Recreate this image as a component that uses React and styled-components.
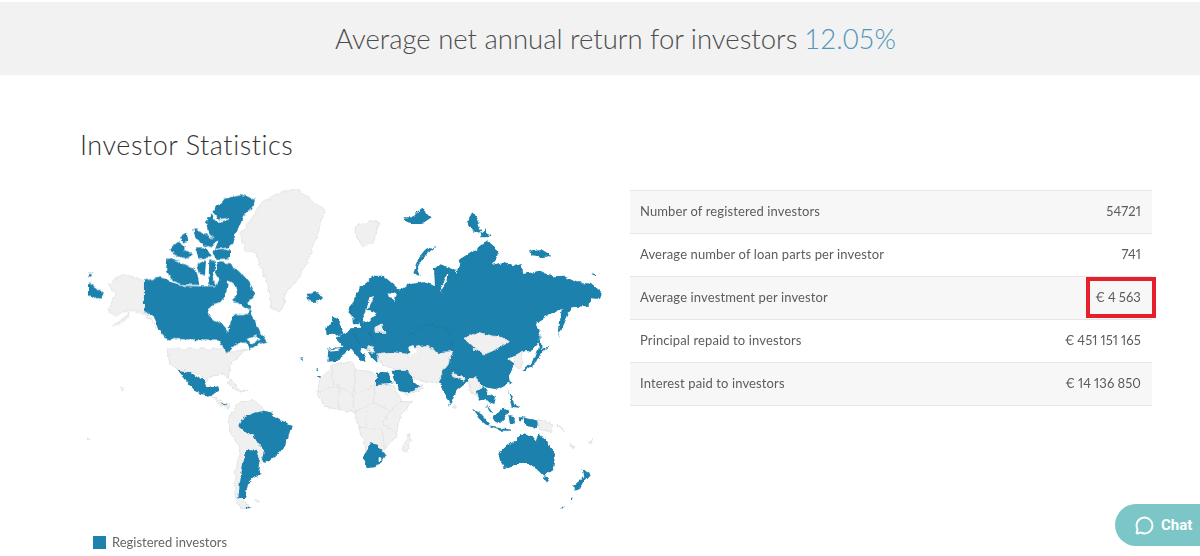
import React from 'react'
import styled, { createGlobalStyle } from 'styled-components'
import { MessageCircle } from 'lucide-react'

const GlobalStyle = createGlobalStyle`
  html, body {
    margin: 0;
    height: 100%;
    overflow: hidden;
    background: #fff;
    font-family: Lato, "Open Sans", sans-serif;
    color: #555;
  }
`

const Banner = styled.div`
  margin-top: 2px;
  height: 73px;
  padding-left: 31px;
  background: #f2f2f2;
  display: flex;
  align-items: center;
  justify-content: center;
  font-size: 27.5px;
  font-weight: 300;
  color: #4d4d4d;
`

const Rate = styled.span`
  color: #4f96bb;
  margin-left: 7px;
`

const Content = styled.main`
  padding: 54px 48px 0 80px;
`

const Title = styled.h1`
  margin: 0;
  height: 51px;
  font-size: 27px;
  line-height: 32px;
  font-weight: 300;
  color: #333;
  letter-spacing: 0.55px;
`

const Columns = styled.div`
  display: flex;
  align-items: flex-start;
`

const MapColumn = styled.div`
  width: 550px;
  flex: none;
`

const MapSvg = styled.svg`
  display: block;
  width: 530px;
  height: 335px;
  margin-top: -1px;
`

const Land = styled.path`
  fill: ${p => (p.$kind === 'blue' ? '#1f82ad' : p.$kind === 'water' ? '#fff' : '#f0f0f0')};
  stroke: ${p => (p.$kind === 'grey' ? '#e2e2e2' : 'none')};
  stroke-width: ${p => (p.$kind === 'grey' ? 3 : 0)};
  stroke-linejoin: round;
`

const Border = styled.path`
  fill: none;
  stroke: ${p => (p.$dark ? '#1b749c' : '#e0e0e0')};
  stroke-width: 2.4;
  stroke-linejoin: round;
`

const Legend = styled.div`
  display: flex;
  align-items: center;
  gap: 6px;
  margin: 21px 0 0 13px;
  font-size: 13px;
  line-height: 14px;
  color: #666;
`

const Swatch = styled.span`
  width: 13px;
  height: 13px;
  background: #1f82ad;
`

const Table = styled.div`
  width: 522px;
  margin-top: 10px;
  border-top: 1px solid #e6e6e6;
`

const Row = styled.div`
  position: relative;
  height: 40px;
  padding: 0 11px 2px 10px;
  display: flex;
  align-items: center;
  justify-content: space-between;
  font-size: 13px;
  letter-spacing: 0.12px;
  color: #5c5c5c;
  background: ${p => (p.$shaded ? '#f7f7f7' : '#fff')};
  border-bottom: 1px solid #e6e6e6;
`

const Value = styled.span`
  font-variant-numeric: proportional-nums;
  word-spacing: -0.5px;
`

const Highlight = styled.span`
  position: absolute;
  right: -4px;
  top: 0;
  width: 62px;
  height: 33px;
  border: 4px solid #e71f2b;
`

const ChatButton = styled.button`
  position: fixed;
  right: 0;
  bottom: 10px;
  width: 85px;
  height: 42px;
  padding: 0 0 0 20px;
  display: flex;
  align-items: center;
  gap: 7px;
  border: 0;
  border-radius: 22px 0 0 22px;
  background: #7cc6c7;
  color: #fff;
  font-family: Roboto, sans-serif;
  font-size: 15px;
  font-weight: 700;
`

const stats = [
  ['Number of registered investors', '54721'],
  ['Average number of loan parts per investor', '741'],
  ['Average investment per investor', '€ 4 563', true],
  ['Principal repaid to investors', '€ 451 151 165'],
  ['Interest paid to investors', '€ 14 136 850'],
]

// outlines traced from crops, every group has its own crop origin at 3x
const northWest = [
  ['grey', 'M480,170 L520,110 L540,75 L590,45 L650,30 L690,60 L735,95 L715,160 L690,230 L660,290 L620,340 L600,400 L575,385 L565,320 L545,275 L530,225 L495,210 Z'],
  ['grey', 'M192,305 L130,287 L85,315 L105,345 L85,395 L110,410 L145,392 L195,402 L230,445 L192,395 Z'],
  ['grey', 'M150,395 L130,420 L100,440 L135,425 Z'],
  ['blue', 'M27,313 L50,325 L72,345 L55,362 L27,350 Z'],
  ['blue', 'M27,282 L38,282 L38,290 L27,290 Z'],
  ['blue', 'M192,305 L245,295 L280,310 L300,320 L355,322 L410,322 L418,300 L405,275 L415,250 L450,252 L480,280 L505,310 L525,345 L505,370 L510,385 L530,440 L545,465 L560,488 L530,498 L510,512 L495,490 L470,497 L440,522 L415,482 L260,480 L235,450 L225,420 L192,395 Z'],
  ['water', 'M445,305 L465,320 L472,345 L452,365 L475,372 L505,395 L518,385 L500,405 L465,405 L452,425 L448,462 L425,435 L395,420 L385,400 L400,375 L425,368 L438,345 Z'],
  ['water', 'M500,480 L530,470 L540,480 L515,495 Z'],
  ['blue', 'M262,238 L290,245 L320,258 L345,268 L355,300 L358,318 L300,315 L280,305 L258,275 Z'],
  ['blue', 'M352,255 L378,245 L375,290 L360,285 Z'],
  ['blue', 'M388,245 L410,245 L398,295 L412,320 L385,320 Z'],
  ['blue', 'M268,210 L295,188 L315,205 L300,235 L270,220 Z'],
  ['blue', 'M300,175 L320,162 L325,185 L310,190 Z'],
  ['blue', 'M340,150 L360,155 L390,175 L415,180 L395,205 L375,200 L345,175 Z'],
  ['blue', 'M345,205 L375,205 L395,235 L355,238 Z'],
  ['blue', 'M315,210 L340,225 L320,238 L290,232 Z'],
  ['blue', 'M400,215 L450,210 L450,238 L410,240 Z'],
  ['blue', 'M378,130 L400,95 L430,60 L480,45 L525,60 L520,85 L490,110 L470,160 L450,205 L405,210 L415,185 L385,165 Z'],
  ['water', 'M393,95 L415,122 L447,116 L446,122 L412,130 L390,100 Z'],
  ['blue', 'M680,345 L710,340 L727,350 L710,370 L685,365 Z'],
]

const americas = [
  ['grey', 'M260,0 L430,0 L450,10 L500,0 L480,15 L450,50 L445,85 L430,75 L400,80 L380,95 L360,75 L295,62 L270,45 Z'],
  ['grey', 'M445,205 L475,160 L520,155 L555,185 L590,210 L550,345 L540,345 L505,400 L490,450 L510,478 L480,478 L465,440 L465,380 L480,300 L445,240 Z'],
  ['grey', 'M395,140 L420,155 L450,170 L445,180 L415,165 Z'],
  ['grey', 'M450,90 L475,120 L505,128 L470,125 L445,105 Z'],
  ['grey', 'M122,112 L130,118 L128,124 Z'],
  ['grey', 'M22,270 L29,272 L25,276 Z'],
  ['grey', 'M528,452 L540,454 L532,458 Z'],
  ['blue', 'M292,62 L325,68 L345,80 L372,92 L380,118 L415,112 L418,125 L390,140 L365,135 L340,120 L320,95 Z'],
  ['blue', 'M420,160 L438,165 L435,170 Z'],
  ['blue', 'M475,232 L490,205 L530,190 L555,185 L570,190 L590,210 L635,228 L625,265 L610,300 L575,330 L555,345 L545,330 L553,305 L535,285 L520,260 L495,250 Z'],
  ['blue', 'M500,303 L530,305 L540,330 L535,360 L545,375 L520,385 L505,400 L495,450 L475,450 L480,400 L490,340 Z'],
  ['blue', 'M497,470 L515,476 L500,478 Z'],
  ['blue', 'M662,28 L668,28 L668,33 L662,33 Z'],
  ['blue', 'M710,57 L716,57 L716,63 L710,63 Z'],
  ['blue', 'M712,78 L725,78 L725,83 L712,83 Z'],
]

const russia = [
  ['grey', 'M45,145 L90,125 L120,130 L100,190 L70,205 L50,175 Z'],
  ['blue', 'M60,435 L25,400 L60,325 L100,290 L130,290 L165,320 L180,335 L210,315 L250,310 L285,318 L282,270 L300,255 L345,272 L350,285 L360,240 L400,215 L440,185 L475,215 L470,240 L455,258 L490,250 L520,262 L545,255 L550,285 L600,275 L640,292 L670,290 L710,310 L750,310 L785,340 L780,360 L750,358 L750,380 L695,385 L670,440 L655,475 L660,425 L665,390 L620,412 L575,440 L600,465 L595,490 L560,515 L530,530 L100,540 L60,470 Z'],
  ['water', 'M145,340 L170,345 L165,365 L150,355 Z'],
  ['water', 'M318,285 L322,285 L310,330 L302,342 L306,322 Z'],
  ['blue', 'M290,200 L255,215 L235,240 L220,280 L240,295 L232,270 L250,235 Z'],
  ['blue', 'M380,130 L400,100 L415,130 L425,165 L405,160 Z'],
  ['blue', 'M420,175 L435,150 L452,175 Z'],
  ['blue', 'M190,115 L215,115 L230,100 L245,88 L275,115 L245,135 L210,135 Z'],
  ['blue', 'M570,215 L600,210 L635,232 L600,235 L575,232 Z'],
  ['blue', 'M752,285 L768,282 L768,290 Z'],
]

const eurafrica = [
  ['grey', 'M20,310 L30,275 L65,230 L125,218 L135,240 L195,255 L198,288 L250,290 L275,335 L305,335 L285,365 L265,395 L260,440 L225,480 L170,505 L165,465 L145,415 L135,370 L85,360 L45,355 Z'],
  ['grey', 'M295,435 L303,450 L290,492 L275,485 Z'],
  ['blue', 'M52,218 L55,185 L85,182 L98,172 L78,145 L105,132 L125,118 L170,115 L230,60 L320,60 L320,170 L295,170 L255,190 L215,170 L205,195 L205,218 L190,210 L175,185 L150,175 L170,215 L150,215 L125,180 L95,200 L90,215 Z'],
  ['water', 'M178,25 L192,22 L172,62 L200,72 L170,100 L155,100 L168,70 Z'],
  ['blue', 'M130,90 L145,88 L146,106 L132,106 Z'],
  ['grey', 'M195,115 L215,105 L225,130 L195,130 Z'],
  ['grey', 'M172,170 L185,172 L190,190 L178,188 Z'],
  ['blue', 'M50,130 L62,105 L68,80 L85,90 L95,115 L100,135 L75,140 Z'],
  ['blue', 'M48,120 L60,110 L65,135 L50,135 Z'],
  ['blue', 'M0,15 L25,10 L35,25 L15,42 L0,35 Z'],
]

const asia = [
  ['blue', 'M-20,60 L285,60 L300,100 L295,130 L270,160 L245,160 L205,180 L225,195 L205,225 L210,250 L170,270 L130,265 L100,235 L75,255 L50,275 L30,320 L5,260 L-20,225 Z'],
  ['grey', 'M72,118 L115,100 L150,110 L185,115 L205,128 L170,150 L135,165 L105,150 Z'],
  ['grey', 'M38,222 L75,238 L72,244 L45,236 Z'],
  ['grey', 'M85,240 L105,232 L125,270 L112,290 L90,275 Z'],
  ['grey', 'M220,170 L245,160 L245,200 L230,208 Z'],
  ['blue', 'M245,215 L280,190 L295,150 L300,105 L305,150 L330,140 L300,165 L285,195 L250,220 Z'],
  ['grey', 'M40,320 L46,322 L44,328 L38,326 Z'],
]

const middleEast = [
  ['grey', 'M200,195 L235,190 L290,195 L320,175 L345,170 L385,190 L428,188 L412,228 L395,245 L395,270 L380,282 L340,278 L310,265 L290,240 L250,240 L215,225 Z'],
  ['water', 'M295,170 L310,165 L318,190 L300,200 Z'],
  ['grey', 'M275,312 L325,295 L340,285 L335,300 L285,322 Z'],
  ['blue', 'M198,248 L235,250 L248,285 L198,288 Z'],
  ['blue', 'M245,245 L290,245 L315,280 L328,290 L315,305 L275,312 L255,285 Z'],
]

const oceania = [
  ['blue', 'M90,283 L115,288 L125,310 L140,318 L130,335 L105,355 L80,358 L72,325 Z'],
  ['water', 'M116,328 L124,328 L124,336 L116,336 Z'],
  ['blue', 'M410,125 L430,115 L445,135 L465,145 L460,165 L445,160 L435,150 L420,155 Z'],
  ['blue', 'M440,165 L460,190 L450,190 Z'],
  ['blue', 'M400,180 L420,190 L450,225 L440,232 L415,210 Z'],
  ['blue', 'M445,232 L500,240 L525,245 L480,245 Z'],
  ['blue', 'M458,205 L490,178 L505,185 L495,205 L475,225 Z'],
  ['blue', 'M505,200 L525,205 L520,225 L510,225 Z'],
  ['blue', 'M505,125 L515,145 L530,170 L535,180 L515,175 Z'],
  ['blue', 'M510,97 L516,100 L508,110 Z'],
  ['blue', 'M535,205 L550,205 L545,218 Z'],
  ['blue', 'M550,205 L595,215 L590,240 L555,225 Z'],
  ['grey', 'M595,212 L640,225 L635,250 L595,240 Z'],
  ['grey', 'M650,225 L680,248 L660,238 Z'],
  ['grey', 'M690,290 L705,296 L695,298 Z'],
  ['grey', 'M745,278 L758,272 L752,286 Z'],
  ['blue', 'M475,315 L500,290 L525,275 L550,250 L575,262 L590,280 L598,250 L625,285 L645,315 L640,360 L610,380 L595,365 L570,345 L530,345 L495,358 L483,345 Z'],
  ['blue', 'M608,382 L628,385 L618,405 Z'],
  ['blue', 'M725,358 L750,375 L735,392 L720,420 L702,425 L700,410 L730,385 Z'],
  ['blue', 'M665,473 L670,473 L670,478 L665,478 Z'],
  ['blue', 'M695,445 L700,445 L700,450 L695,450 Z'],
]

const africaBorders = 'M20,310 L85,290 L130,320 L195,288 M135,240 L135,290 L130,320 L135,370 M65,230 L70,290 M85,290 L85,360 M195,288 L190,340 L135,370 M190,340 L240,365 L275,335 M240,365 L220,400 L260,440 M145,415 L215,420 M170,365 L165,415 M215,420 L225,480 M285,220 L345,250 L380,282 M345,170 L350,250 M385,190 L350,250'

const darkBorders = 'M52,180 L100,175 M125,120 L150,170 M160,115 L200,160 L215,170 M290,145 L345,108 L410,115 L430,170 M120,75 L135,25'

const Group = ({ x, y, shapes, children }) => (
  <g transform={`translate(${x} ${y}) scale(0.3333)`}>
    {shapes.map(([kind, d], i) => <Land key={i} $kind={kind} d={d} />)}
    {children}
  </g>
)

const WorldMap = () => (
  <MapSvg viewBox="80 180 530 335" aria-label="World map">
    <defs>
      <filter id="coast" x="0" y="0" width="100%" height="100%">
        <feTurbulence type="fractalNoise" baseFrequency="0.16" numOctaves="3" seed="4" result="noise" />
        <feDisplacementMap in="SourceGraphic" in2="noise" scale="5" xChannelSelector="R" yChannelSelector="G" />
        <feGaussianBlur stdDeviation="0.35" />
      </filter>
    </defs>
    <g filter="url(#coast)">
      <Group x={310} y={290} shapes={eurafrica.slice(0, 2)}>
        <Border d={africaBorders} />
      </Group>
      <Group x={80} y={350} shapes={americas} />
      <Group x={80} y={180} shapes={northWest} />
      <Group x={340} y={180} shapes={russia} />
      <Group x={310} y={290} shapes={eurafrica.slice(2)} />
      <Group x={440} y={300} shapes={asia} />
      <Group x={310} y={290} shapes={middleEast}>
        <Border $dark d={darkBorders} />
      </Group>
      <Group x={340} y={350} shapes={oceania} />
    </g>
  </MapSvg>
)

export default function App() {
  return (
    <>
      <GlobalStyle />
      <Banner>
        Average net annual return for investors<Rate>12.05%</Rate>
      </Banner>
      <Content>
        <Title>Investor Statistics</Title>
        <Columns>
          <MapColumn>
            <WorldMap />
            <Legend>
              <Swatch />
              Registered investors
            </Legend>
          </MapColumn>
          <Table>
            {stats.map(([label, value, marked], i) => (
              <Row key={label} $shaded={i % 2 === 0}>
                <span>{label}</span>
                <Value>{value}</Value>
                {marked && <Highlight />}
              </Row>
            ))}
          </Table>
        </Columns>
      </Content>
      <ChatButton>
        <MessageCircle size={19} strokeWidth={2.4} />
        Chat
      </ChatButton>
    </>
  )
}
